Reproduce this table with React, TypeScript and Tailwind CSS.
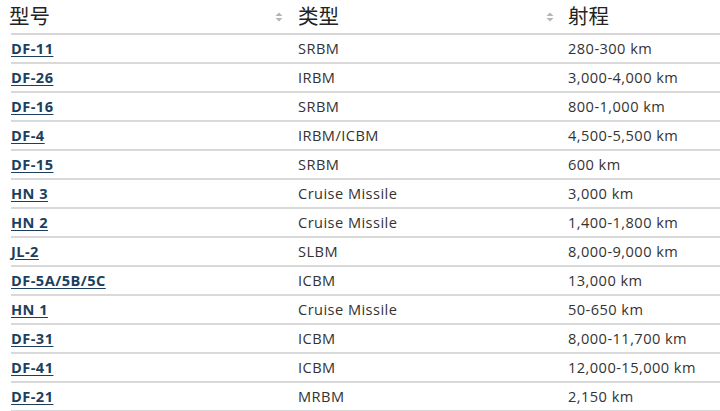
const rows: { name: string; type: string; range: string }[] = [
  { name: "DF-11", type: "SRBM", range: "280-300 km" },
  { name: "DF-26", type: "IRBM", range: "3,000-4,000 km" },
  { name: "DF-16", type: "SRBM", range: "800-1,000 km" },
  { name: "DF-4", type: "IRBM/ICBM", range: "4,500-5,500 km" },
  { name: "DF-15", type: "SRBM", range: "600 km" },
  { name: "HN 3", type: "Cruise Missile", range: "3,000 km" },
  { name: "HN 2", type: "Cruise Missile", range: "1,400-1,800 km" },
  { name: "JL-2", type: "SLBM", range: "8,000-9,000 km" },
  { name: "DF-5A/5B/5C", type: "ICBM", range: "13,000 km" },
  { name: "HN 1", type: "Cruise Missile", range: "50-650 km" },
  { name: "DF-31", type: "ICBM", range: "8,000-11,700 km" },
  { name: "DF-41", type: "ICBM", range: "12,000-15,000 km" },
  { name: "DF-21", type: "MRBM", range: "2,150 km" },
];

function SortIcon() {
  return (
    <svg width="8" height="10" viewBox="0 0 8 10" className="shrink-0">
      <path d="M4 0.5 L7.5 4 H0.5 Z" fill="#b5b5b5" />
      <path d="M4 9.5 L7.5 6 H0.5 Z" fill="#b5b5b5" />
    </svg>
  );
}

export default function App() {
  const font = { fontFamily: '"Open Sans", "Noto Sans CJK SC", sans-serif' };
  return (
    <div className="h-[411px] w-[720px] overflow-hidden bg-white pl-[11px]" style={font}>
      <table className="w-full border-collapse text-[14.6px] tracking-[0.45px] text-[#333]">
        <thead>
          <tr className="h-[34px] border-b-2 border-[#d6d6d6] text-[20.5px] tracking-normal text-[#222]">
            <th className="w-[287px] p-0 text-left font-normal">
              <div className="flex items-center justify-between pr-[15px]">
                <span className="-ml-[2px]">型号</span>
                <SortIcon />
              </div>
            </th>
            <th className="w-[270px] p-0 text-left font-normal">
              <div className="flex items-center justify-between pr-[14px]">
                <span>类型</span>
                <SortIcon />
              </div>
            </th>
            <th className="p-0 text-left font-normal">射程</th>
          </tr>
        </thead>
        <tbody>
          {rows.map((r) => (
            <tr key={r.name} className="h-[29px] border-b-2 border-[#d9d9d9]">
              <td className="p-0">
                <a href="#" className="font-bold text-[#1d3f5e] underline decoration-1 underline-offset-2">
                  {r.name}
                </a>
              </td>
              <td className="p-0">{r.type}</td>
              <td className="p-0">{r.range}</td>
            </tr>
          ))}
        </tbody>
      </table>
    </div>
  );
}
